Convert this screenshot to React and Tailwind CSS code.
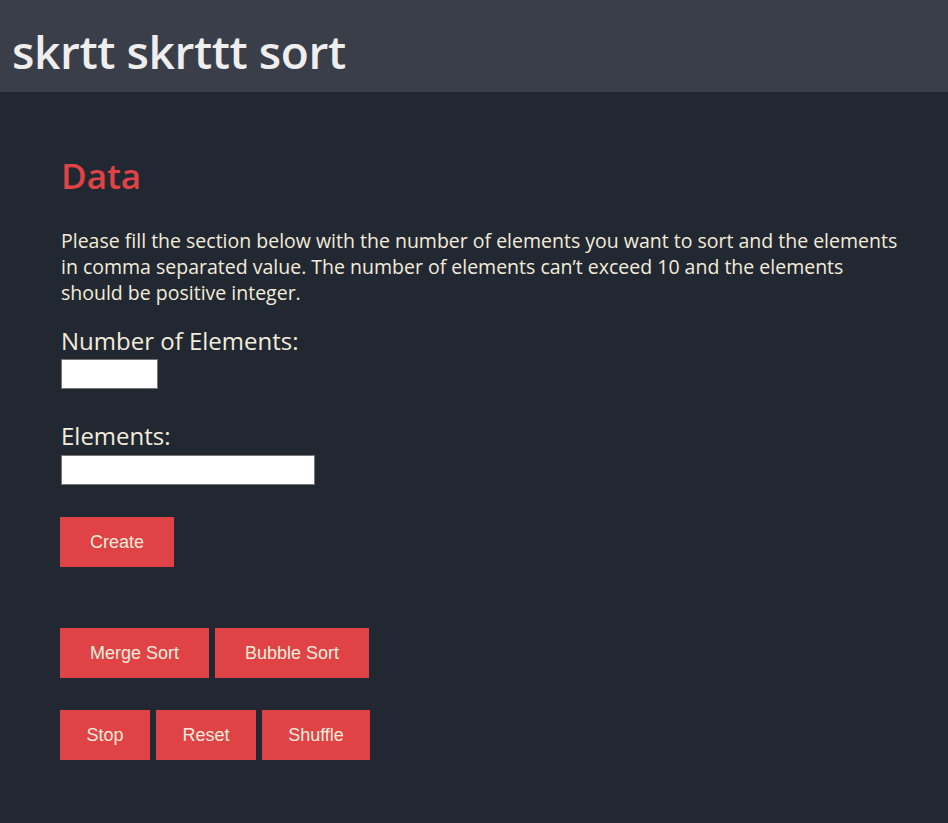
import React from "react";

function Btn({ children, w }) {
  return (
    <button
      className={
        "h-[50px] bg-[#e04346] text-[#f3ecdc] text-[18px] text-center shrink-0 " +
        w
      }
      style={{ fontFamily: '"Liberation Sans", Arial, sans-serif' }}
    >
      {children}
    </button>
  );
}

export default function App() {
  return (
    <div
      className="min-h-[823px] bg-[#222831] text-[#f3ecdc]"
      style={{ fontFamily: '"Open Sans", sans-serif' }}
    >
      <header className="h-[92px] bg-[#393e48] pl-[12px] pt-[28px]">
        <h1 className="text-[46px] font-semibold leading-none tracking-[-0.4px] text-[#eeeeee]">
          skrtt skrttt sort
        </h1>
      </header>
      <main className="pl-[60px] pr-[30px] pt-[66px]">
        <h2 className="text-[35px] font-semibold leading-none text-[#e04346] pl-[1px]">
          Data
        </h2>
        <p className="mt-[35px] w-[846px] pl-[1px] text-[19.5px] leading-[26px]">
          Please fill the section below with the number of elements you want to
          sort and the elements in comma separated value. The number of elements
          can’t exceed 10 and the elements should be positive integer.
        </p>
        <label className="mt-[20px] block pl-[1px] text-[24px] leading-[30px]">
          Number of Elements:
        </label>
        <input
          className="mt-[3px] ml-[1px] block h-[30px] w-[97px] bg-white border border-[#767676]"
          type="text"
        />
        <label className="mt-[32px] block pl-[1px] text-[24px] leading-[30px]">
          Elements:
        </label>
        <input
          className="mt-[4px] ml-[1px] block h-[30px] w-[254px] bg-white border border-[#767676]"
          type="text"
        />
        <div className="mt-[32px] flex">
          <Btn w="w-[114px]">Create</Btn>
        </div>
        <div className="mt-[61px] flex gap-[6px]">
          <Btn w="w-[149px]">Merge Sort</Btn>
          <Btn w="w-[154px]">Bubble Sort</Btn>
        </div>
        <div className="mt-[32px] flex gap-[6px]">
          <Btn w="w-[90px]">Stop</Btn>
          <Btn w="w-[100px]">Reset</Btn>
          <Btn w="w-[108px]">Shuffle</Btn>
        </div>
      </main>
    </div>
  );
}
